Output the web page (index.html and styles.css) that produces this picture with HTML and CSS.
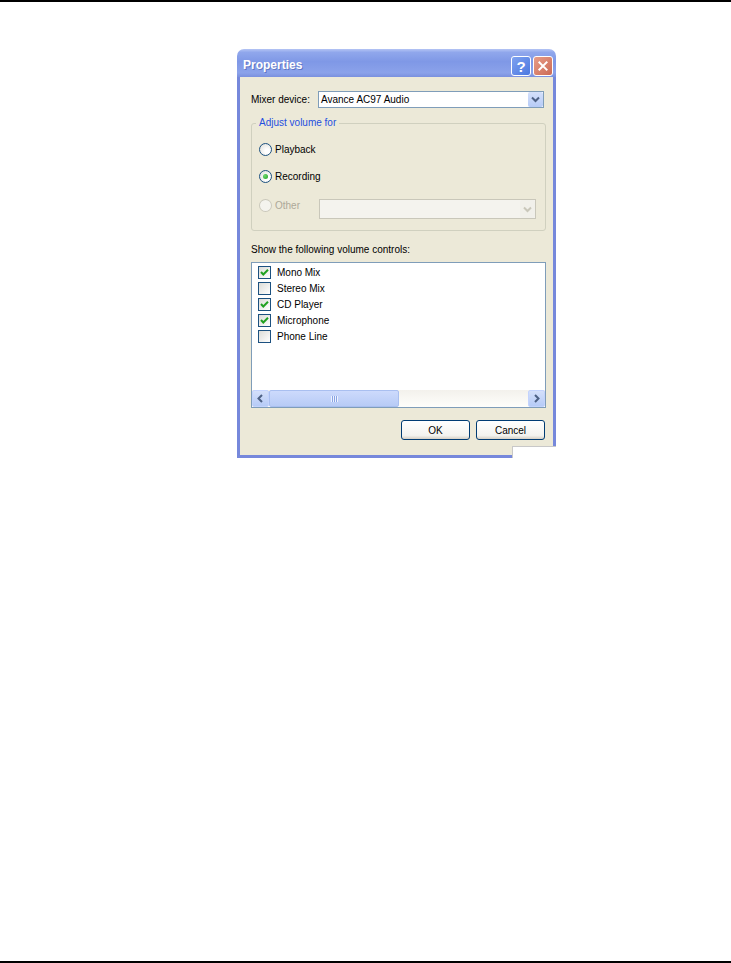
FILE: index.html
```html
<!DOCTYPE html>
<html lang="en">
<head>
    <meta charset="UTF-8">
    <meta name="viewport" content="width=device-width, initial-scale=1.0">
    <title>Properties</title>
    <link rel="stylesheet" href="styles.css">
</head>
<body>
    <div class="page">
        <div class="dialog">
            <div class="titlebar">
                <span class="title">Properties</span>
                <div class="caption-buttons">
                    <span class="cap-btn help">?</span>
                    <span class="cap-btn close">
                        <svg width="20" height="20" viewBox="0 0 20 20"><path d="M6 6 L14 14 M14 6 L6 14" stroke="#fff" stroke-width="2.2" stroke-linecap="square"/></svg>
                    </span>
                </div>
            </div>

            <div class="dialog-body">
                <div class="field-row">
                    <span class="field-label">Mixer device:</span>
                    <div class="combo">
                        <span class="combo-text">Avance AC97 Audio</span>
                        <span class="combo-btn">
                            <svg width="15" height="15" viewBox="0 0 15 15"><polyline points="4,5.5 7.5,9 11,5.5" fill="none" stroke="#4d6185" stroke-width="2"/></svg>
                        </span>
                    </div>
                </div>

                <fieldset class="group">
                    <legend>Adjust volume for</legend>
                    <div class="radio-row first"><span class="radio"></span>Playback</div>
                    <div class="radio-row second"><span class="radio checked"></span>Recording</div>
                    <div class="radio-row other disabled">
                        <span class="radio"></span>
                        <span class="radio-label">Other</span>
                        <div class="combo combo-disabled">
                            <span class="combo-text"></span>
                            <span class="combo-btn">
                                <svg width="15" height="15" viewBox="0 0 15 15"><polyline points="4,5.5 7.5,9 11,5.5" fill="none" stroke="#c9c7ba" stroke-width="2"/></svg>
                            </span>
                        </div>
                    </div>
                </fieldset>

                <div class="list-label">Show the following volume controls:</div>

                <div class="listbox">
                    <ul class="check-list" id="controls"></ul>
                    <div class="hscroll">
                        <span class="scroll-btn">
                            <svg width="15" height="15" viewBox="0 0 15 15"><polyline points="9,4 5.5,7.5 9,11" fill="none" stroke="#4d6185" stroke-width="2"/></svg>
                        </span>
                        <span class="scroll-thumb"><span class="grip"></span></span>
                        <span class="scroll-track"></span>
                        <span class="scroll-btn">
                            <svg width="15" height="15" viewBox="0 0 15 15"><polyline points="6,4 9.5,7.5 6,11" fill="none" stroke="#4d6185" stroke-width="2"/></svg>
                        </span>
                    </div>
                </div>

                <div class="button-row">
                    <button class="btn">OK</button>
                    <button class="btn">Cancel</button>
                </div>
            </div>
            <div class="corner-patch"></div>
        </div>
    </div>

    <script>
        const controls = [
            { name: 'Mono Mix', checked: true },
            { name: 'Stereo Mix', checked: false },
            { name: 'CD Player', checked: true },
            { name: 'Microphone', checked: true },
            { name: 'Phone Line', checked: false }
        ];

        const list = document.getElementById('controls');
        const tick = '<svg width="11" height="11" viewBox="0 0 11 11"><polyline points="2,5 4.3,7.5 9,2.8" fill="none" stroke="#21a121" stroke-width="2"/></svg>';

        controls.forEach(item => {
            const li = document.createElement('li');
            const box = document.createElement('span');
            box.className = 'checkbox';
            if (item.checked) box.innerHTML = tick;
            li.appendChild(box);
            li.appendChild(document.createTextNode(item.name));
            list.appendChild(li);
        });
    </script>
</body>
</html>
```

FILE: styles.css
```css
body {
    margin: 0;
    background-color: #fff;
    font-family: "Liberation Sans", Arial, sans-serif;
    font-size: 10px;
    color: #000;
}
.page {
    height: 963px;
    box-sizing: border-box;
    border-top: 2px solid #000;
    border-bottom: 2px solid #000;
    padding-top: 47px;
}
.dialog {
    position: relative;
    width: 319px;
    margin-left: 237px;
}
.titlebar {
    height: 28px;
    display: flex;
    justify-content: space-between;
    padding: 0 3px 0 6px;
    border-radius: 7px 7px 0 0;
    background: linear-gradient(to bottom, #b4c4f4 0%, #90a7ec 12%, #7f98e6 45%, #8ba2ea 85%, #7a90de 100%);
}
.title {
    margin-top: 9px;
    color: #fff;
    font-size: 12px;
    font-weight: bold;
    text-shadow: 1px 1px 0 #6176c4;
}
.caption-buttons {
    display: flex;
    gap: 2px;
    margin-top: 7px;
}
.cap-btn {
    width: 18px;
    height: 18px;
    border: 1px solid #fff;
    border-radius: 3px;
    display: flex;
    align-items: center;
    justify-content: center;
    color: #fff;
}
.cap-btn svg {
    width: 18px;
    height: 18px;
}
.help {
    background: linear-gradient(135deg, #7fa2f0, #4c78e0);
    font-size: 15px;
    font-weight: bold;
}
.close {
    background: linear-gradient(135deg, #e79d88, #cc6a55);
}
.dialog-body {
    background-color: #ece9d8;
    border: 3px solid #7688db;
    border-top: none;
    padding: 14px 7px 15px 11px;
}
.field-row {
    display: flex;
    align-items: center;
}
.field-label {
    width: 67px;
}
.combo {
    display: flex;
    width: 226px;
    height: 17px;
    box-sizing: border-box;
    border: 1px solid #7f9db9;
    background-color: #fff;
}
.combo-text {
    flex: 1;
    padding-left: 2px;
    line-height: 15px;
}
.combo-btn {
    width: 15px;
    height: 15px;
    border-radius: 2px;
    background: linear-gradient(to bottom, #d4e0fb, #b6cbf7);
}
.combo-btn svg {
    display: block;
}
.group {
    margin: 9px 0 0;
    padding: 12px 9px 11px 7px;
    border: 1px solid #d0d0bf;
    border-radius: 3px;
    min-width: 0;
}
.group legend {
    padding: 0 3px;
    margin-left: -3px;
    line-height: 12px;
    color: #1f4fe0;
}
.radio-row {
    display: flex;
    align-items: center;
    height: 16px;
}
.radio-row.second {
    margin-top: 11px;
}
.radio-row.other {
    margin-top: 15px;
    height: 20px;
    align-items: flex-start;
}
.radio-label {
    line-height: 13px;
    width: 44px;
}
.disabled {
    color: #aca899;
}
.radio {
    position: relative;
    width: 11px;
    height: 11px;
    margin-right: 3px;
    border: 1px solid #1c5180;
    border-radius: 50%;
    background: radial-gradient(circle at 65% 65%, #ffffff 20%, #dcdcd7 100%);
}
.radio.checked::after {
    content: "";
    position: absolute;
    left: 3px;
    top: 3px;
    width: 5px;
    height: 5px;
    border-radius: 50%;
    background: radial-gradient(circle at 35% 35%, #6fd86f, #21a121);
}
.disabled .radio {
    border-color: #cac8bb;
    background: #f4f3ee;
}
.combo-disabled {
    width: 218px;
    height: 20px;
    border-color: #c9c7ba;
    background-color: #f4f3ee;
}
.combo-disabled .combo-btn {
    height: 18px;
    background: #f1f0ea;
}
.combo-disabled .combo-btn svg {
    margin-top: 2px;
}
.list-label {
    margin-top: 12px;
    line-height: 13px;
}
.listbox {
    margin-top: 6px;
    height: 146px;
    width: 295px;
    box-sizing: border-box;
    border: 1px solid #7f9db9;
    background-color: #fff;
    display: flex;
    flex-direction: column;
}
.check-list {
    flex: 1;
    list-style-type: none;
    margin: 0;
    padding: 1px 0 0 6px;
}
.check-list li {
    display: flex;
    align-items: center;
    height: 16px;
}
.checkbox {
    width: 11px;
    height: 11px;
    margin-right: 6px;
    border: 1px solid #1c5180;
    background: linear-gradient(135deg, #dcdcd7, #ffffff);
}
.checkbox svg {
    display: block;
}
.hscroll {
    display: flex;
    height: 17px;
    background: linear-gradient(to bottom, #f3f1ec, #fefefb);
}
.scroll-btn {
    width: 15px;
    height: 15px;
    border: 1px solid #c3d3fd;
    border-radius: 2px;
    background: linear-gradient(to bottom, #d4e0fb, #b6cbf7);
}
.scroll-btn svg {
    display: block;
}
.scroll-thumb {
    width: 128px;
    height: 15px;
    border: 1px solid #a9bff0;
    border-radius: 2px;
    background: linear-gradient(to bottom, #cddafc, #b7cbf6);
    display: flex;
    align-items: center;
    justify-content: center;
}
.grip {
    width: 7px;
    height: 6px;
    background: repeating-linear-gradient(to right, #eef3fe 0 1px, #8aa4e4 1px 2px);
}
.scroll-track {
    flex: 1;
}
.button-row {
    display: flex;
    justify-content: flex-end;
    gap: 6px;
    margin-top: 12px;
    padding-right: 1px;
}
.btn {
    width: 69px;
    height: 20px;
    padding: 0;
    border: 1px solid #003c74;
    border-radius: 3px;
    background: linear-gradient(to bottom, #ffffff, #f3f3ef 80%, #d6d0c5);
    font-family: "Liberation Sans", Arial, sans-serif;
    font-size: 10px;
    color: #000;
}
.corner-patch {
    position: absolute;
    right: 0;
    bottom: 0;
    width: 43px;
    height: 11px;
    background-color: #fff;
    border-top: 1px solid #c8c8c8;
    border-left: 1px solid #c8c8c8;
}
```
